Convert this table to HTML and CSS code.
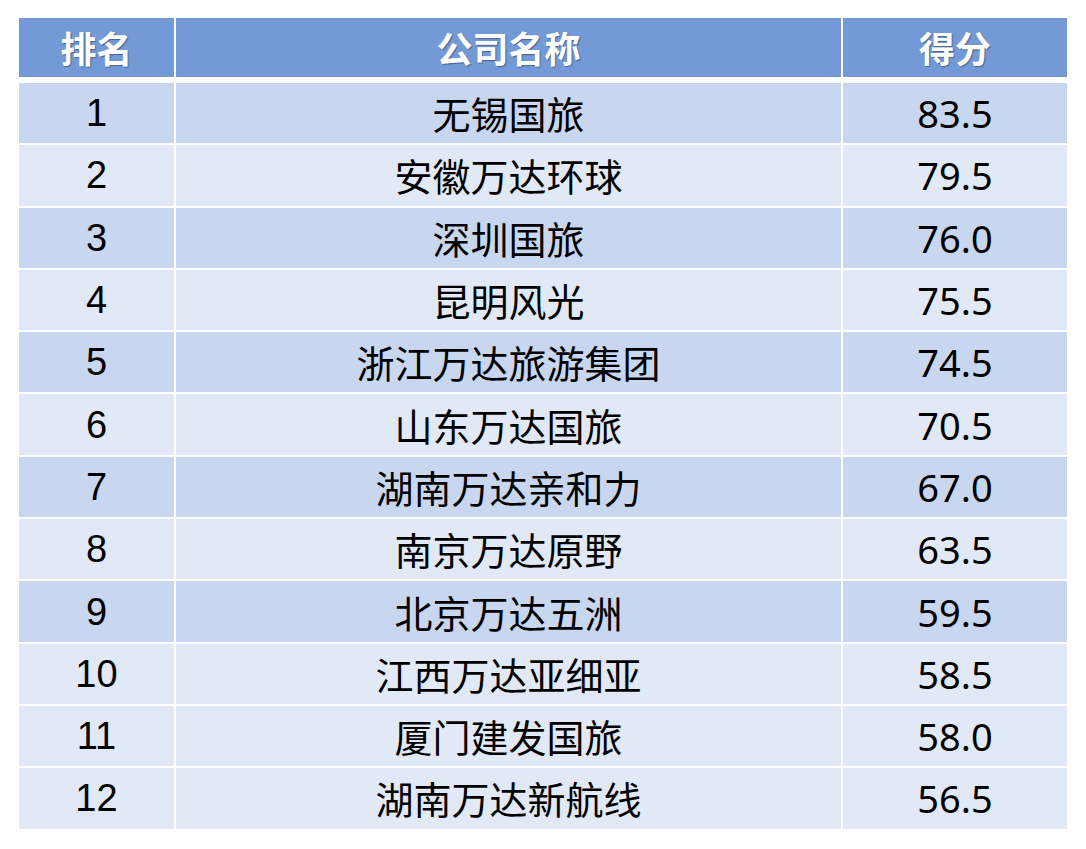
FILE: index.html
```html
<!DOCTYPE html>
<html lang="zh-CN">
<head>
<meta charset="utf-8">
<title>排名</title>
<link rel="stylesheet" href="styles.css">
</head>
<body>
<div class="table">
  <div class="row head">
    <div class="cell">排名</div>
    <div class="cell">公司名称</div>
    <div class="cell">得分</div>
  </div>
  <div class="row dark"><div class="cell rank">1</div><div class="cell name">无锡国旅</div><div class="cell score">83.5</div></div>
  <div class="row light"><div class="cell rank">2</div><div class="cell name">安徽万达环球</div><div class="cell score">79.5</div></div>
  <div class="row dark"><div class="cell rank">3</div><div class="cell name">深圳国旅</div><div class="cell score">76.0</div></div>
  <div class="row light"><div class="cell rank">4</div><div class="cell name">昆明风光</div><div class="cell score">75.5</div></div>
  <div class="row dark"><div class="cell rank">5</div><div class="cell name">浙江万达旅游集团</div><div class="cell score">74.5</div></div>
  <div class="row light"><div class="cell rank">6</div><div class="cell name">山东万达国旅</div><div class="cell score">70.5</div></div>
  <div class="row dark"><div class="cell rank">7</div><div class="cell name">湖南万达亲和力</div><div class="cell score">67.0</div></div>
  <div class="row light"><div class="cell rank">8</div><div class="cell name">南京万达原野</div><div class="cell score">63.5</div></div>
  <div class="row dark"><div class="cell rank">9</div><div class="cell name">北京万达五洲</div><div class="cell score">59.5</div></div>
  <div class="row light"><div class="cell rank">10</div><div class="cell name">江西万达亚细亚</div><div class="cell score">58.5</div></div>
  <div class="row light"><div class="cell rank">11</div><div class="cell name">厦门建发国旅</div><div class="cell score">58.0</div></div>
  <div class="row light"><div class="cell rank">12</div><div class="cell name">湖南万达新航线</div><div class="cell score">56.5</div></div>
</div>
</body>
</html>
```

FILE: styles.css
```css
html, body {
  margin: 0;
  padding: 0;
  background: #ffffff;
}
body {
  padding: 18px 19px 0 19px;
  font-family: "Noto Sans CJK SC", "Noto Sans", sans-serif;
}
.table {
  width: 1048px;
  display: flex;
  flex-direction: column;
  gap: 2px;
}
.row {
  display: grid;
  grid-template-columns: 155px 665px 224px;
  column-gap: 2px;
  height: 60.3px;
}
.cell {
  display: flex;
  align-items: center;
  justify-content: center;
  color: #000000;
  font-size: 38px;
  line-height: 1;
}
.head {
  height: 59px;
  margin-bottom: 4px;
}
.head .cell {
  background: #7399d7;
  color: #ffffff;
  font-weight: 700;
  font-size: 36px;
  text-shadow: 1px 1px 1px rgba(0, 0, 0, 0.35);
  padding-bottom: 2px;
}
.dark .cell {
  background: #c9d6ef;
}
.light .cell {
  background: #e2e9f6;
}
.rank {
  font-family: "Liberation Sans", Arial, sans-serif;
  font-size: 38px;
}
.name {
  font-family: "Noto Sans CJK SC", sans-serif;
  font-size: 38px;
}
.score {
  font-family: "Noto Sans", "Open Sans", sans-serif;
  font-size: 38px;
}
```
